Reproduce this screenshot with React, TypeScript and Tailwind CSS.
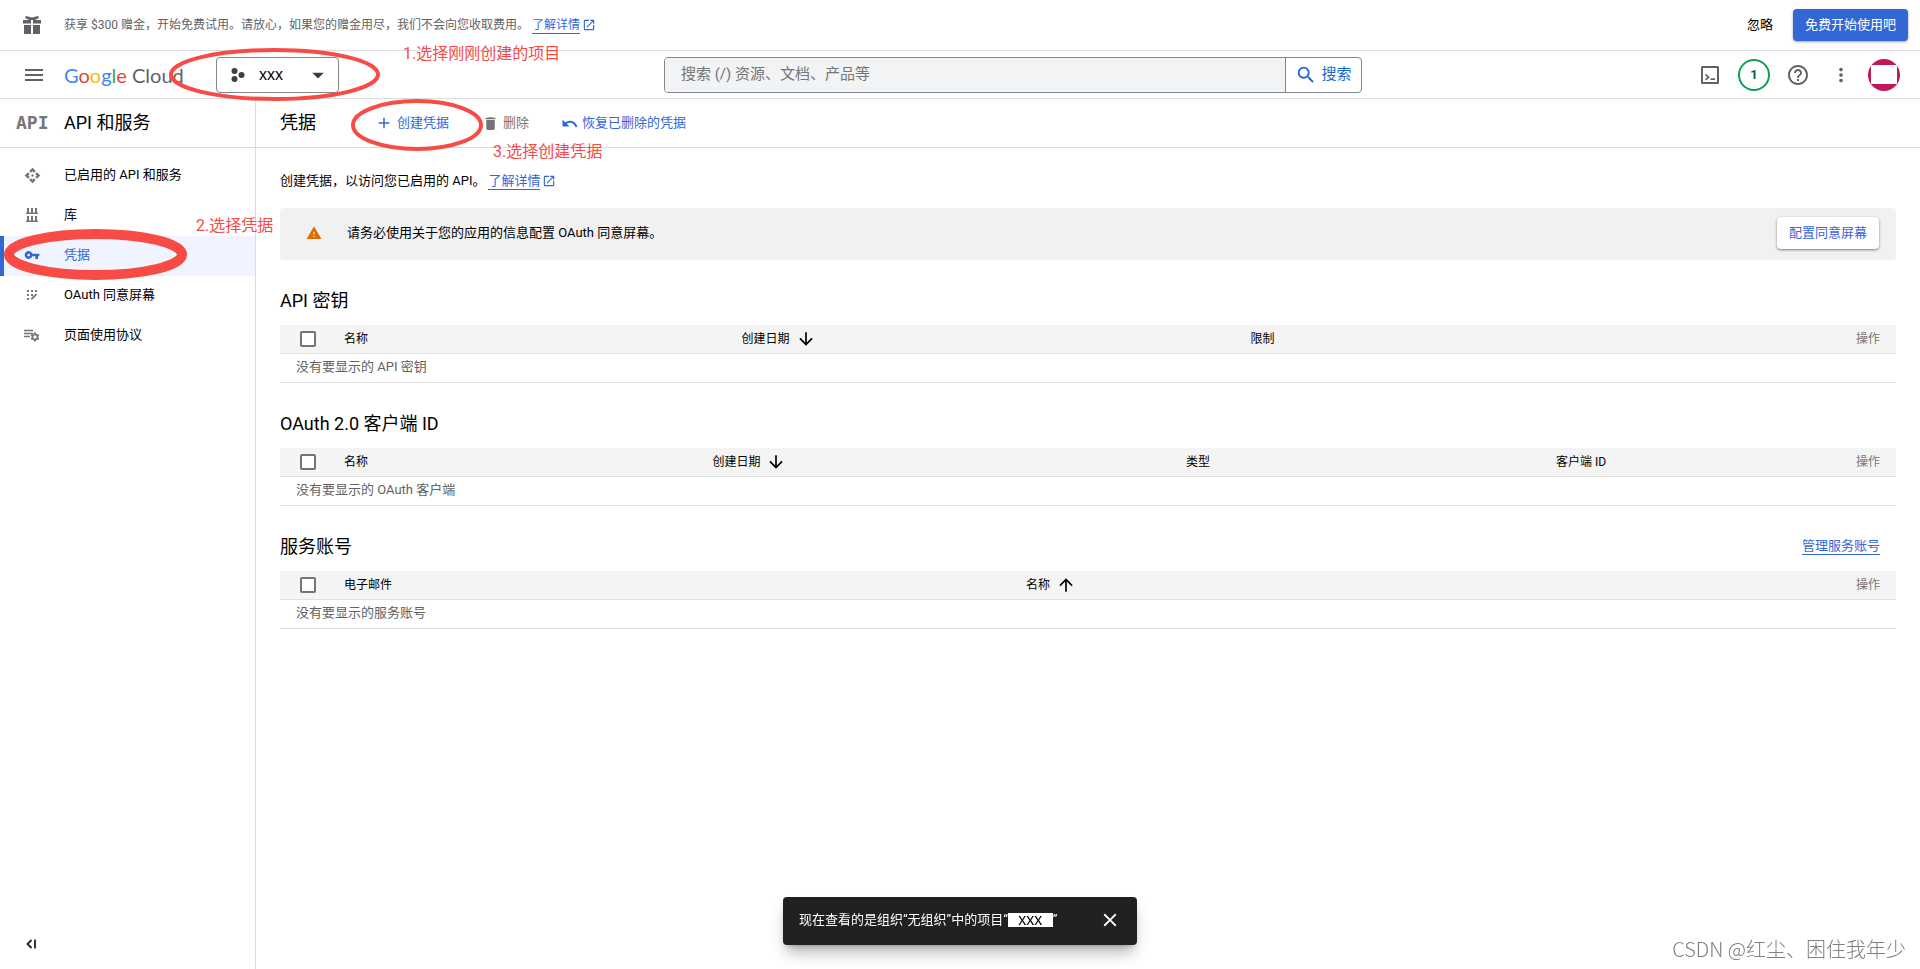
import type { ReactNode } from 'react';
import {
  MdAdd,
  MdApi,
  MdArrowDownward,
  MdArrowDropDown,
  MdArrowUpward,
  MdClose,
  MdDelete,
  MdHelpOutline,
  MdMenu,
  MdMoreVert,
  MdOpenInNew,
  MdSearch,
  MdVpnKey,
  MdWarning,
} from 'react-icons/md';

// ── Icons ──────────────────────────────────────────────────────────────────────

function GiftIcon() {
  return (
    <svg width="18" height="18" viewBox="0 0 18 18" fill="#5f6368">
      <path d="M0 4h8v3.5H0zM10 4h8v3.5h-8zM1 9h7v9H1zM10 9h7v9h-7z" />
      <path d="M3 0l6 1.5L15 0l1 2-4 2H6L2 2z" />
    </svg>
  );
}

function ProjectIcon() {
  return (
    <svg width="14" height="14" viewBox="0 0 14 14" fill="#3c4043">
      <circle cx="3.5" cy="3" r="3" />
      <circle cx="3.5" cy="11" r="3" />
      <circle cx="10.5" cy="7" r="3" />
    </svg>
  );
}

function ShellIcon() {
  return (
    <svg width="18" height="18" viewBox="0 0 18 18" fill="none" stroke="#5f6368" strokeWidth="2">
      <rect x="1" y="1" width="16" height="16" rx="0.5" />
      <path d="M4.5 8.5L7.5 11.2L4.5 14M9.5 13.2H14" strokeWidth="1.7" />
    </svg>
  );
}

function LibraryIcon() {
  return (
    <svg width="12" height="14" viewBox="0 0 12 14" fill="#757575">
      <path d="M1 0h2v4.5h2V0h2v4.5h2V0h2v4.5h1V6H0V4.5h1zM1 8h2v4.5h2V8h2v4.5h2V8h2v4.5h1V14H0v-1.5h1z" />
    </svg>
  );
}

function ConsentIcon() {
  return (
    <svg width="12" height="12" viewBox="0 0 12 12" fill="#757575">
      <path d="M1 1h2v2H1zM5 1h2v2H5zM9 1h2v2H9zM1 5h2v2H1zM5 5h2v2H5zM1 9h2v2H1z" />
      <path d="M5 9.2L9.8 4.4l1.4 1.4L6.4 10.6H5z" />
    </svg>
  );
}

function AgreementIcon() {
  return (
    <svg width="16" height="14" viewBox="0 0 16 14" fill="none" stroke="#757575">
      <path d="M0 2.5h9M0 5.5h9M0 8.5h6" strokeWidth="1.6" />
      <circle cx="11" cy="9" r="2.6" strokeWidth="1.8" />
      <path d="M11 4.6v1.4M11 12v1.4M7.2 6.8l1.2.7M13.6 10.5l1.2.7M7.2 11.2l1.2-.7M13.6 7.5l1.2-.7" strokeWidth="1.8" />
    </svg>
  );
}

function RestoreIcon() {
  return (
    <svg width="16" height="16" viewBox="0 0 16 16" fill="none" stroke="#3367d6" strokeWidth="2">
      <path d="M3 9C6 5.5 12 5.5 14.5 12" />
      <path d="M.5 4.5v7h7z" fill="#3367d6" stroke="none" />
    </svg>
  );
}

function CollapseIcon() {
  return (
    <svg width="10" height="10" viewBox="0 0 10 10" fill="none" stroke="#212121" strokeWidth="1.8">
      <path d="M5.5 1L1.5 5l4 4M9 .5v9" />
    </svg>
  );
}

// ── Shared pieces ──────────────────────────────────────────────────────────────

function ExternalLink({ children }: { children: ReactNode }) {
  return (
    <a href="#" className="inline-flex items-center gap-0.5 text-[#3367d6]">
      <span className="border-b border-[#3367d6] leading-4">{children}</span>
      <MdOpenInNew size={14} />
    </a>
  );
}

type Column = { label: string; width: string; sort?: 'up' | 'down' };

function CredentialTable({
  title,
  columns,
  empty,
  action,
}: {
  title: string;
  columns: Column[];
  empty: string;
  action?: ReactNode;
}) {
  return (
    <section>
      <div className="flex h-[65px] items-center justify-between pt-4 pr-4">
        <h2 className="text-lg leading-6">{title}</h2>
        {action}
      </div>
      <table className="w-full table-fixed border-separate border-spacing-0 text-left">
        <thead>
          <tr className="h-[29px] bg-[#f4f4f4] text-xs">
            <th className="w-16 border-b border-[#e0e0e0] p-0 pl-5">
              <input
                type="checkbox"
                aria-label={`全选 ${title}`}
                className="block size-4 appearance-none rounded-xs border-2 border-[#757575] bg-white"
              />
            </th>
            {columns.map((c) => (
              <th key={c.label} className={`${c.width} border-b border-[#e0e0e0] p-0 font-normal`}>
                <span className="flex items-center gap-1.5">
                  {c.label}
                  {c.sort === 'down' && <MdArrowDownward size={20} />}
                  {c.sort === 'up' && <MdArrowUpward size={20} />}
                </span>
              </th>
            ))}
            <th className="border-b border-[#e0e0e0] p-0 pr-4 text-right font-normal text-[#757575]">操作</th>
          </tr>
        </thead>
        <tbody>
          <tr className="h-[29px]">
            <td
              colSpan={columns.length + 2}
              className="border-b border-[#e0e0e0] p-0 pb-0.5 pl-4 text-[13px] leading-5 text-[#616161]"
            >
              {empty}
            </td>
          </tr>
        </tbody>
      </table>
    </section>
  );
}

// ── Data ───────────────────────────────────────────────────────────────────────

const NAV_ITEMS = [
  { label: '已启用的 API 和服务', icon: <MdApi size={17} color="#757575" /> },
  { label: '库', icon: <LibraryIcon /> },
  { label: '凭据', icon: <MdVpnKey size={16} color="#3367d6" />, active: true },
  { label: 'OAuth 同意屏幕', icon: <ConsentIcon /> },
  { label: '页面使用协议', icon: <AgreementIcon /> },
];

const KEY_COLUMNS: Column[] = [
  { label: '名称', width: 'w-[24.6%]' },
  { label: '创建日期', width: 'w-[31.5%]', sort: 'down' },
  { label: '限制', width: 'w-[30%]' },
];

const OAUTH_COLUMNS: Column[] = [
  { label: '名称', width: 'w-[22.8%]' },
  { label: '创建日期', width: 'w-[29.3%]', sort: 'down' },
  { label: '类型', width: 'w-[22.9%]' },
  { label: '客户端 ID', width: 'w-[15%]' },
];

const ACCOUNT_COLUMNS: Column[] = [
  { label: '电子邮件', width: 'w-[42.2%]' },
  { label: '名称', width: 'w-[42%]', sort: 'up' },
];

// ── Page sections ──────────────────────────────────────────────────────────────

function TrialBanner() {
  return (
    <div className="flex h-[51px] items-center border-b border-[#dadce0] pr-3 pl-[23px]">
      <GiftIcon />
      <p className="ml-[23px] flex items-center gap-[3px] text-xs text-[#5f6368]">
        获享 $300 赠金，开始免费试用。请放心，如果您的赠金用尽，我们不会向您收取费用。
        <ExternalLink>了解详情</ExternalLink>
      </p>
      <button className="mr-5 ml-auto text-[13px]">忽略</button>
      <button className="h-8 rounded bg-[#3367d6] px-3 text-[13px] text-white shadow-sm shadow-black/30">
        免费开始使用吧
      </button>
    </div>
  );
}

function Header() {
  return (
    <header className="flex h-12 items-center border-b border-[#dadce0] pr-5">
      <div className="flex w-[664px] shrink-0 items-center pl-[22px]">
        <button aria-label="导航菜单">
          <MdMenu size={24} color="#5f6368" />
        </button>
        <a href="#" className="ml-[18px] w-[152px] font-[Lato,sans-serif] text-xl leading-6 whitespace-nowrap">
          <span className="text-[#4285f4]">G</span>
          <span className="text-[#ea4335]">o</span>
          <span className="text-[#fbbc04]">o</span>
          <span className="text-[#4285f4]">g</span>
          <span className="text-[#34a853]">l</span>
          <span className="text-[#ea4335]">e</span>
          <span className="text-[#5f6368]"> Cloud</span>
        </a>
        <button className="flex h-9 w-[123px] items-center rounded border border-[#80868b] pr-1.5 pl-3.5">
          <ProjectIcon />
          <span className="ml-3.5 font-['Liberation_Sans',sans-serif] text-base leading-5">xxx</span>
          <MdArrowDropDown size={28} color="#3c4043" className="ml-auto" />
        </button>
      </div>
      <form className="flex h-9 max-w-[698px] flex-1 overflow-hidden rounded border border-[#80868b]">
        <input
          type="text"
          aria-label="搜索"
          placeholder="搜索 (/) 资源、文档、产品等"
          className="min-w-0 flex-1 bg-[#f1f3f4] px-4 text-[15px] placeholder:text-[#757575]"
        />
        <button
          type="button"
          className="flex w-[76px] items-center justify-center gap-1 border-l border-[#80868b] text-[15px] text-[#1967d2]"
        >
          <MdSearch size={22} />
          搜索
        </button>
      </form>
      <div className="ml-auto flex items-center gap-3">
        <button aria-label="Cloud Shell" className="flex size-8 items-center justify-center">
          <ShellIcon />
        </button>
        <button className="size-8 rounded-full border-2 border-[#0f9d58] text-[13px] font-bold text-[#0b5a36]">
          1
        </button>
        <button aria-label="帮助" className="flex size-8 items-center justify-center">
          <MdHelpOutline size={24} color="#5f6368" />
        </button>
        <button aria-label="更多" className="flex h-8 w-[30px] items-center justify-center">
          <MdMoreVert size={22} color="#5f6368" />
        </button>
        <button
          aria-label="账号"
          className="flex size-8 items-center justify-center overflow-hidden rounded-full bg-[#c2185b]"
        >
          <span className="h-[19px] w-[26px] bg-white" />
        </button>
      </div>
    </header>
  );
}

function Sidebar() {
  return (
    <aside className="flex w-64 shrink-0 flex-col border-r border-[#dadce0]">
      <div className="flex h-[49px] items-center border-b border-[#dadce0] pl-4">
        <span className="w-12 font-['DejaVu_Sans_Mono',monospace] text-lg font-bold text-[#757575]">API</span>
        <h2 className="text-lg">API 和服务</h2>
      </div>
      <nav className="pt-2">
        {NAV_ITEMS.map((item) => (
          <a
            key={item.label}
            href="#"
            className={
              item.active
                ? 'flex h-10 items-center border-l-4 border-[#3367d6] bg-[#f0f4fe] pb-0.5 text-[13px] text-[#3367d6]'
                : 'flex h-10 items-center border-l-4 border-transparent pb-0.5 text-[13px]'
            }
          >
            <span className="ml-4 flex w-6 justify-center">{item.icon}</span>
            <span className="ml-5">{item.label}</span>
          </a>
        ))}
      </nav>
      <button aria-label="收起" className="mt-auto mb-5 ml-[26px] w-fit">
        <CollapseIcon />
      </button>
    </aside>
  );
}

function Credentials() {
  return (
    <main className="min-w-0 flex-1">
      <div className="flex h-[49px] items-center border-b border-[#dadce0] pl-6 text-[13px] text-[#3367d6]">
        <h1 className="mr-[59px] text-lg text-black">凭据</h1>
        <div className="flex items-center gap-[33px]">
          <button className="flex items-center gap-1">
            <MdAdd size={18} />
            创建凭据
          </button>
          <button className="flex items-center gap-1 text-[#757575]">
            <MdDelete size={17} />
            删除
          </button>
          <button className="flex items-center gap-1">
            <RestoreIcon />
            恢复已删除的凭据
          </button>
        </div>
      </div>
      <div className="px-6 pt-6">
        <p className="flex h-5 items-center gap-[3px] pb-0.5 text-[13px]">
          创建凭据，以访问您已启用的 API。
          <ExternalLink>了解详情</ExternalLink>
        </p>
        <div className="mt-4 flex h-[52px] items-center rounded bg-[#f1f1f1] pr-[17px] pb-0.5 pl-[26px] text-[13px]">
          <MdWarning size={16} color="#e06c00" />
          <p className="ml-[25px]">请务必使用关于您的应用的信息配置 OAuth 同意屏幕。</p>
          <button className="ml-auto h-8 rounded bg-white px-3 text-[#3367d6] shadow-sm shadow-black/40">
            配置同意屏幕
          </button>
        </div>
        <CredentialTable title="API 密钥" columns={KEY_COLUMNS} empty="没有要显示的 API 密钥" />
        <CredentialTable title="OAuth 2.0 客户端 ID" columns={OAUTH_COLUMNS} empty="没有要显示的 OAuth 客户端" />
        <CredentialTable
          title="服务账号"
          columns={ACCOUNT_COLUMNS}
          empty="没有要显示的服务账号"
          action={
            <a href="#" className="border-b border-[#3367d6] text-[13px] leading-4 text-[#3367d6]">
              管理服务账号
            </a>
          }
        />
      </div>
    </main>
  );
}

function Toast() {
  return (
    <div className="fixed bottom-6 left-1/2 flex h-12 w-[354px] -translate-x-1/2 items-center rounded bg-[#212121] px-4 pb-0.5 text-[13px] text-white shadow-lg shadow-black/30">
      <p className="flex items-center whitespace-nowrap">
        现在查看的是组织“无组织”中的项目“
        <span className="flex h-3.5 w-[45px] items-center justify-center bg-white font-['Liberation_Sans',sans-serif] text-base leading-4 text-black">
          xxx
        </span>
        ”
      </p>
      <button aria-label="关闭" className="ml-auto">
        <MdClose size={22} />
      </button>
    </div>
  );
}

// Hand-drawn step markers that float above the console
function StepMarkers() {
  return (
    <div className="pointer-events-none absolute inset-0 text-base leading-6 text-[#f84b46]">
      <svg width="500" height="300" viewBox="0 0 500 300" fill="none" stroke="#f84b46" className="absolute top-0 left-0">
        <ellipse cx="274.5" cy="74.5" rx="103.5" ry="24.5" strokeWidth="4" />
        <ellipse cx="95.5" cy="254.5" rx="86.5" ry="20.5" strokeWidth="10" />
        <ellipse cx="417" cy="125" rx="64" ry="24" strokeWidth="4" />
      </svg>
      <span className="absolute top-[42px] left-[403px]">1.选择刚刚创建的项目</span>
      <span className="absolute top-[214px] left-[196px]">2.选择凭据</span>
      <span className="absolute top-[140px] left-[493px]">3.选择创建凭据</span>
    </div>
  );
}

export default function App() {
  return (
    <div className="relative flex min-h-screen flex-col bg-white font-[Roboto,'Noto_Sans_CJK_SC',sans-serif] text-black">
      <TrialBanner />
      <Header />
      <div className="flex flex-1">
        <Sidebar />
        <Credentials />
      </div>
      <StepMarkers />
      <Toast />
      <span className="fixed right-3.5 bottom-2 font-['Noto_Sans_CJK_SC',sans-serif] text-xl leading-6 font-light text-[#808080]">
        CSDN @红尘、困住我年少
      </span>
    </div>
  );
}
